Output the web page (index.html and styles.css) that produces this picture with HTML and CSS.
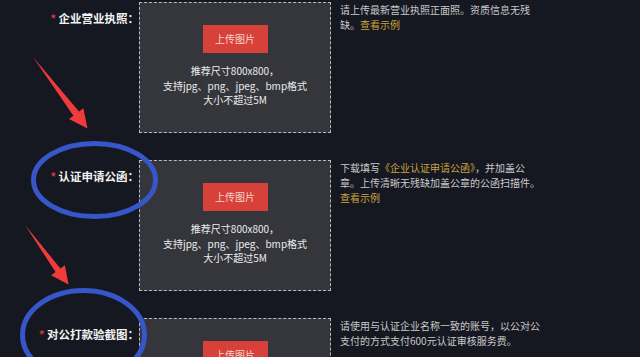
FILE: index.html
```html
<!DOCTYPE html>
<html lang="zh-CN">
<head>
<meta charset="utf-8">
<title>企业认证</title>
<link rel="stylesheet" href="styles.css">
</head>
<body>
<div class="page">
  <div class="form">
    <div class="row">
      <div class="label"><span class="star">*</span>企业营业执照：</div>
      <div class="upload">
        <div class="btn">上传图片</div>
        <div class="tips">推荐尺寸800x800，<br>支持jpg、png、jpeg、bmp格式<br>大小不超过5M</div>
      </div>
      <div class="desc">请上传最新营业执照正面照。资质信息无残缺。<span class="link">查看示例</span></div>
    </div>
    <div class="row">
      <div class="label"><span class="star">*</span>认证申请公函：</div>
      <div class="upload">
        <div class="btn">上传图片</div>
        <div class="tips">推荐尺寸800x800，<br>支持jpg、png、jpeg、bmp格式<br>大小不超过5M</div>
      </div>
      <div class="desc">下载填写<span class="link">《企业认证申请公函》</span>，并加盖公章。上传清晰无残缺加盖公章的公函扫描件。<br><span class="link">查看示例</span></div>
    </div>
    <div class="row">
      <div class="label"><span class="star">*</span>对公打款验截图：</div>
      <div class="upload">
        <div class="btn">上传图片</div>
        <div class="tips">推荐尺寸800x800，<br>支持jpg、png、jpeg、bmp格式<br>大小不超过5M</div>
      </div>
      <div class="desc">请使用与认证企业名称一致的账号，以公对公支付的方式支付600元认证审核服务费。</div>
    </div>
  </div>
  <svg class="marks" width="640" height="357" viewBox="0 0 640 357">
    <polygon class="arrow" points="33,57 79,111.5 83.4,108.2 87.5,128.5 69,119 73.4,115.7"/>
    <polygon class="arrow" points="25,225 60.4,268.5 64.9,265.3 68.5,284.5 51.1,275.3 55.6,272.1"/>
    <ellipse class="ring" cx="94.5" cy="180" rx="61" ry="36.5"/>
    <ellipse class="ring" cx="83.5" cy="335" rx="61" ry="44.5"/>
  </svg>
</div>
</body>
</html>
```
FILE: styles.css
```css
html, body {
  margin: 0;
  padding: 0;
  background: #161821;
}
body {
  width: 640px;
  height: 357px;
  overflow: hidden;
  font-family: "Noto Sans CJK SC", "Microsoft YaHei", sans-serif;
}
.page {
  position: relative;
  width: 640px;
  height: 357px;
  overflow: hidden;
}
.form {
  display: flex;
  flex-direction: column;
  gap: 27px;
  padding-top: 2px;
}
.row {
  display: flex;
  align-items: flex-start;
}
.label {
  width: 139px;
  flex: none;
  box-sizing: border-box;
  text-align: right;
  padding-top: 9px;
  font-size: 11.5px;
  line-height: 15px;
  font-weight: bold;
  color: #f2f2f2;
  white-space: nowrap;
}
.star {
  color: #e2393a;
  font-weight: normal;
  font-size: 14px;
  margin-right: 2px;
  vertical-align: -2px;
}
.upload {
  width: 192px;
  height: 131px;
  flex: none;
  box-sizing: border-box;
  border: 1px dashed #b9bac0;
  background: #35363c;
  display: flex;
  flex-direction: column;
  align-items: center;
  padding-top: 22px;
}
.btn {
  width: 65px;
  height: 28px;
  background: #d8403a;
  color: #f7d6d2;
  font-size: 10px;
  line-height: 28px;
  text-align: center;
}
.tips {
  margin-top: 11px;
  font-size: 10px;
  line-height: 14.5px;
  color: #ececec;
  text-align: center;
  white-space: nowrap;
}
.desc {
  width: 201px;
  flex: none;
  margin-left: 9px;
  font-size: 10px;
  line-height: 15px;
  color: #c9c9c9;
}
.link {
  color: #c9a13e;
}
.marks {
  position: absolute;
  top: 0;
  left: 0;
  pointer-events: none;
}
.arrow {
  fill: #ef3b3b;
}
.ring {
  fill: none;
  stroke: #3656c9;
  stroke-width: 5;
}
```
